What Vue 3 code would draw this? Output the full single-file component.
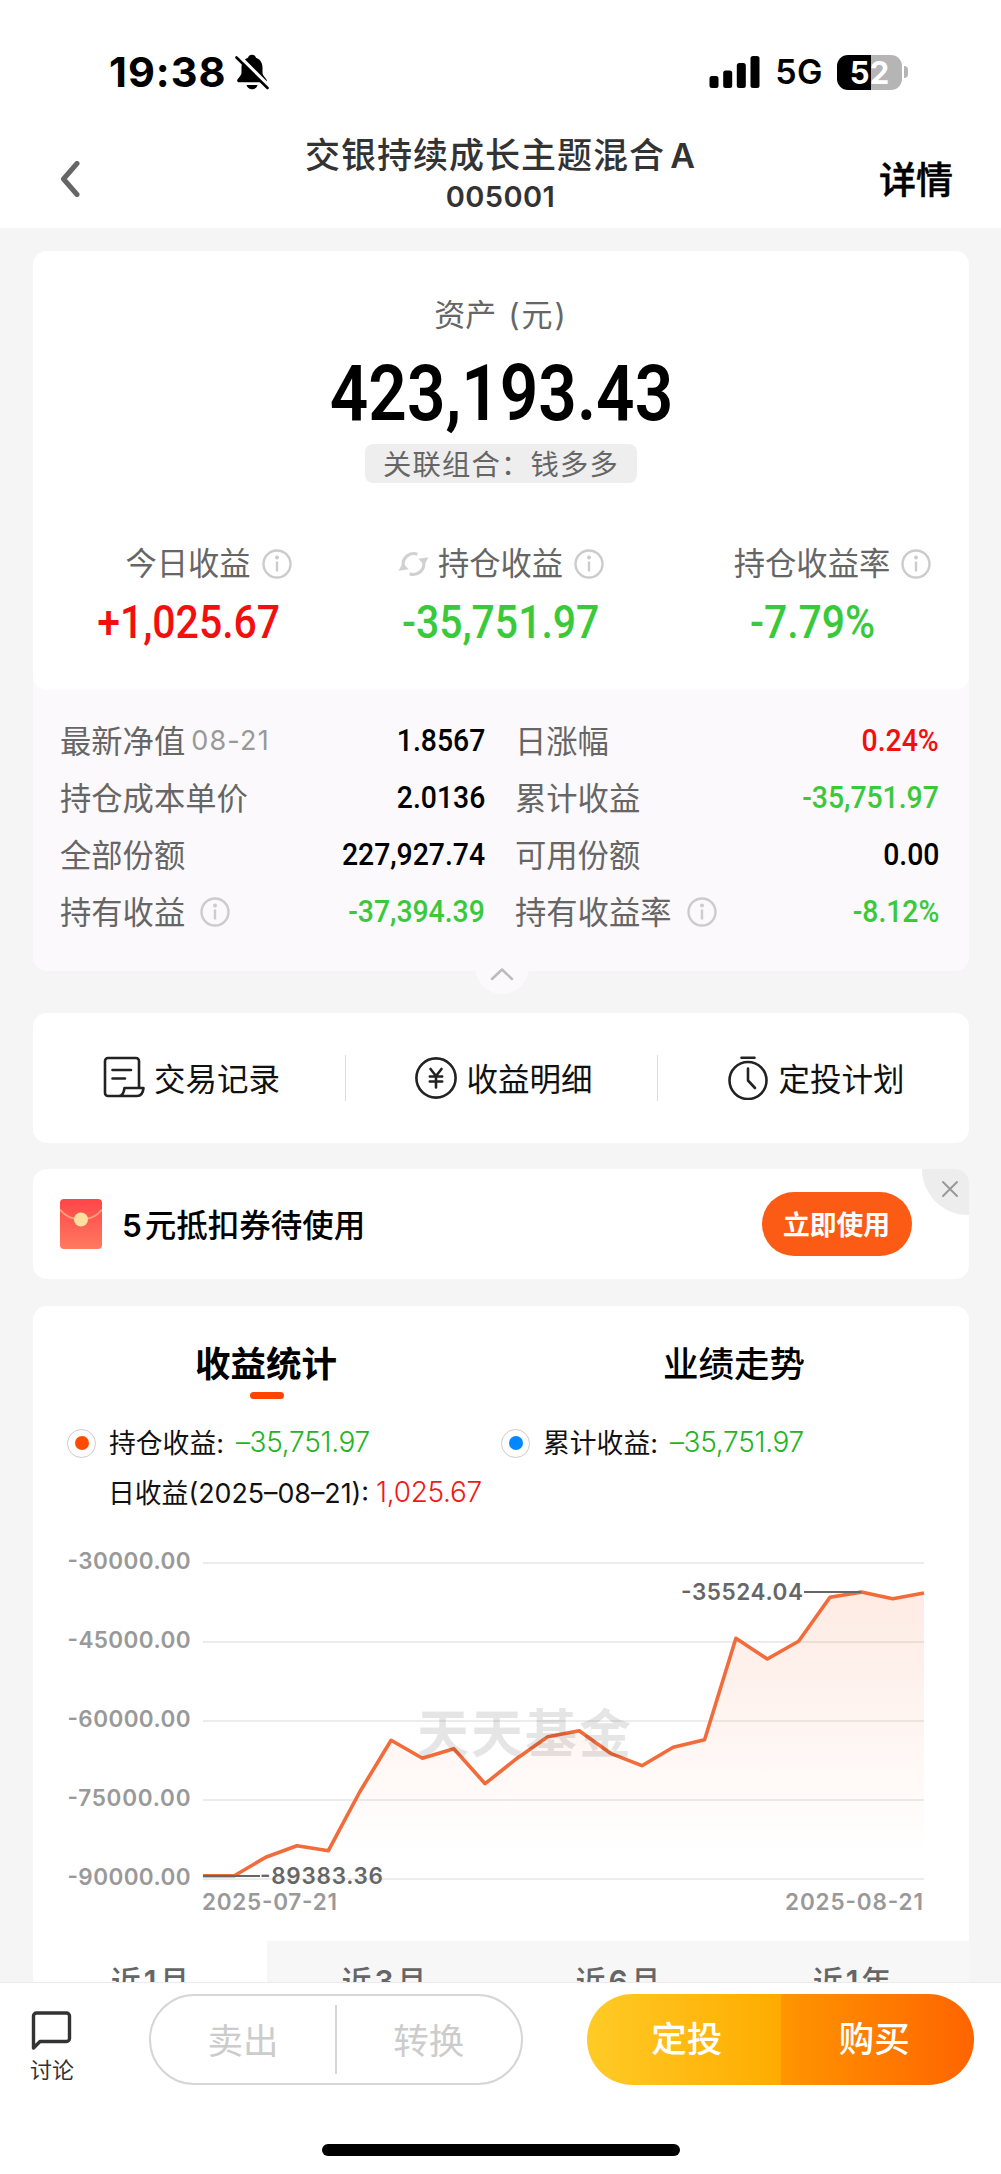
<template>
  <div class="page">
    <header class="top">
      <div class="status">
        <div class="clock">
          <span class="time">19:38</span>
          <svg class="bell" viewBox="0 0 36 36">
            <path d="M18 .8c2 0 3.500 1.200 4 2.900 4.300 1.600 6.500 5.300 6.500 9.800v5c0 3.200 3 4.800 4.200 7.500.5 1.300-.2 2.300-1.700 2.300H5c-1.500 0-2.200-1-1.700-2.300 1.200-2.700 4.200-4.300 4.200-7.500v-5c0-4.500 2.200-8.200 6.500-9.800.5-1.700 2-2.900 4-2.900z" fill="#000" />
            <path d="M12.500 31h11c-.6 2.500-2.800 4.200-5.500 4.200s-4.900-1.700-5.500-4.200z" fill="#000" />
            <path d="M4.500 1.500l31 31" stroke="#fff" stroke-width="3.500" />
            <path d="M2.500 3.500l31 30.500" stroke="#000" stroke-width="2.600" stroke-linecap="round" />
          </svg>
        </div>
        <div class="signal">
          <svg class="bars" viewBox="0 0 50 32">
            <rect x="0" y="20" width="9" height="12" rx="2.500" />
            <rect x="13.700" y="14.500" width="9" height="17.500" rx="2.500" />
            <rect x="27.300" y="7" width="9" height="25" rx="2.500" />
            <rect x="41" y="0" width="9" height="32" rx="2.500" />
          </svg>
          <span class="net">5G</span>
          <div class="battery"><span>52</span></div>
          <i class="nub"></i>
        </div>
      </div>
      <nav class="nav">
        <svg class="back" viewBox="0 0 20 36">
          <path d="M17 2.500L3.500 18 17 33.500" fill="none" stroke="#666" stroke-width="5" stroke-linecap="round" stroke-linejoin="round" />
        </svg>
        <div class="title">
          <div class="name">交银持续成长主题混合<span>A</span></div>
          <div class="code">005001</div>
        </div>
        <span class="detail">详情</span>
      </nav>
    </header>

    <main class="content">
      <section class="asset">
        <div class="asset-main">
          <div class="asset-label">资产<span>(元)</span></div>
          <div class="asset-value"><span class="din">423,193.43</span></div>
          <div class="tag">关联组合：钱多多</div>
          <div class="summary">
            <div v-for="item in summary" :key="item.label" class="summary-item">
              <div class="summary-label" :class="{ centered: item.refresh }">
                <svg v-if="item.refresh" class="refresh" viewBox="0 0 32 28">
                  <path d="M5.500 16A10.800 10.800 0 0 1 20 4M26.500 12A10.800 10.800 0 0 1 12 24" fill="none" stroke="#d0d0d0" stroke-width="3.200" />
                  <path d="M21 8.500l10.500-1.500-4.500 8z M11 19.500l-10.500 1.500 4.500-8z" fill="#d0d0d0" />
                </svg>
                <span>{{ item.label }}</span>
                <svg class="info" viewBox="0 0 30 30">
                  <circle cx="15" cy="15" r="13.500" />
                  <path d="M15 12.500v10" /><circle class="dot" cx="15" cy="8.500" r="2" />
                </svg>
              </div>
              <div class="summary-value" :class="item.tone"><span class="din">{{ item.value }}</span></div>
            </div>
          </div>
        </div>
        <div class="asset-more">
          <div v-for="row in details" :key="row.label" class="row">
            <span class="row-label">{{ row.label }}</span>
            <span v-if="row.date" class="row-date">{{ row.date }}</span>
            <svg v-if="row.info" class="info" viewBox="0 0 30 30">
              <circle cx="15" cy="15" r="13.500" />
              <path d="M15 12.500v10" /><circle class="dot" cx="15" cy="8.500" r="2" />
            </svg>
            <span class="row-value din" :class="row.tone">{{ row.value }}</span>
          </div>
        </div>
        <div class="fold">
          <svg viewBox="0 0 24 14"><path d="M2 12L12 2.500 22 12" fill="none" stroke="#bbb" stroke-width="2.500" stroke-linecap="round" stroke-linejoin="round" /></svg>
        </div>
      </section>

      <section class="actions">
        <div class="action">
          <svg viewBox="0 0 44 44">
            <path d="M37 31V5a3 3 0 0 0-3-3H6a3 3 0 0 0-3 3v32a3 3 0 0 0 3 3h29c3.500 0 6-3 6.500-8H22.500c-.6 4.500-2 8-5.500 8M10.500 14H29M10.500 22.500H23" />
          </svg>
          <span>交易记录</span>
        </div>
        <div class="action">
          <svg viewBox="0 0 44 44">
            <circle cx="22" cy="22" r="19.600" />
            <path d="M16.500 13l5.500 7 5.500-7M22 20v11.500M15.800 20.500h12.400M15.800 25.500h12.400" />
          </svg>
          <span>收益明细</span>
        </div>
        <div class="action">
          <svg viewBox="0 0 44 44">
            <circle cx="22" cy="24.500" r="18.500" />
            <path d="M15.500 1.800h13M22 12.500v12l7 7.500" />
          </svg>
          <span>定投计划</span>
        </div>
      </section>

      <section class="coupon">
        <svg class="envelope" viewBox="0 0 42 50">
          <defs>
            <linearGradient id="env" x1="0" y1="0" x2="0" y2="1">
              <stop offset="0" stop-color="#ff4549" />
              <stop offset="1" stop-color="#ff7a60" />
            </linearGradient>
          </defs>
          <rect width="42" height="50" rx="4" fill="url(#env)" />
          <path d="M0 10.500c5 6.500 12 10 21 10s16-3.500 21-10" fill="none" stroke="#ffa27c" stroke-width="1.800" />
          <circle cx="21" cy="20.500" r="7" fill="#ffdf9f" />
        </svg>
        <span class="coupon-text"><b>5</b>元抵扣券待使用</span>
        <button class="use">立即使用</button>
        <div class="close">
          <svg viewBox="0 0 18 18"><path d="M2 2l14 14M16 2L2 16" stroke="#999" stroke-width="2" stroke-linecap="round" /></svg>
        </div>
      </section>

      <section class="stats">
        <div class="tabs">
          <div class="tab active">收益统计</div>
          <div class="tab">业绩走势</div>
        </div>
        <div class="legend">
          <div class="legend-item">
            <i class="radio orange"></i><span class="k">持仓收益:</span><span class="v down">–35,751.97</span>
          </div>
          <div class="legend-item">
            <i class="radio blue"></i><span class="k">累计收益:</span><span class="v down">–35,751.97</span>
          </div>
        </div>
        <div class="daily">
          <span class="k">日收益<em>(2025–08–21):</em></span><span class="v up">1,025.67</span>
        </div>

        <svg class="chart" viewBox="0 0 936 400">
          <defs>
            <linearGradient id="area" gradientUnits="userSpaceOnUse" x1="0" y1="60" x2="0" y2="325">
              <stop offset="0" stop-color="#f4622a" stop-opacity=".13" />
              <stop offset="1" stop-color="#f4622a" stop-opacity="0" />
            </linearGradient>
          </defs>
          <g v-for="(tick, i) in ticks" :key="tick">
            <line x1="170" x2="891" :y1="TOP + i * STEP" :y2="TOP + i * STEP" stroke="#ececec" stroke-width="2" />
            <text class="tick" x="157.500" :y="TOP + i * STEP + 6" text-anchor="end" textLength="123">{{ tick }}</text>
          </g>
          <polygon :points="areaPoints" fill="url(#area)" />
          <polyline :points="linePoints" fill="none" stroke="#f26b3a" stroke-width="3.600" stroke-linejoin="round" />
          <text class="watermark" x="384" y="223" textLength="214">天天基金</text>
          <line x1="771" x2="828" y1="62" y2="62" stroke="#666" stroke-width="2" />
          <text class="mark" x="648" y="70" textLength="122">-35524.04</text>
          <line x1="170" x2="227" y1="346" y2="346" stroke="#666" stroke-width="2" />
          <text class="mark" x="227" y="354" textLength="123">-89383.36</text>
          <text class="tick" x="169" y="380" textLength="135">2025-07-21</text>
          <text class="tick" x="890" y="380" text-anchor="end" textLength="138">2025-08-21</text>
        </svg>

        <div class="ranges">
          <div v-for="(r, i) in ranges" :key="r.unit + r.n" class="range" :class="{ on: i === 0 }">
            近<b>{{ r.n }}</b>{{ r.unit }}
          </div>
        </div>
      </section>
    </main>

    <footer class="bottom">
      <div class="bar">
        <div class="talk">
          <svg viewBox="0 0 42 40"><path d="M3.500 37V5a3 3 0 0 1 3-3H36.500a3 3 0 0 1 3 3v22.500a3 3 0 0 1-3 3H10z" fill="none" stroke="#333" stroke-width="3.400" stroke-linejoin="round" /></svg>
          <span>讨论</span>
        </div>
        <div class="pill ghost">
          <span>卖出</span>
          <i></i>
          <span>转换</span>
        </div>
        <div class="pill solid">
          <span class="plan">定投</span>
          <span class="buy">购买</span>
        </div>
      </div>
      <div class="home"></div>
    </footer>
  </div>
</template>

<script setup>
import { computed } from 'vue';

const summary = [
  { label: '今日收益', value: '+1,025.67', tone: 'up' },
  { label: '持仓收益', value: '-35,751.97', tone: 'down', refresh: true },
  { label: '持仓收益率', value: '-7.79%', tone: 'down' },
];

const details = [
  { label: '最新净值', date: '08-21', value: '1.8567' },
  { label: '日涨幅', value: '0.24%', tone: 'up' },
  { label: '持仓成本单价', value: '2.0136' },
  { label: '累计收益', value: '-35,751.97', tone: 'down' },
  { label: '全部份额', value: '227,927.74' },
  { label: '可用份额', value: '0.00' },
  { label: '持有收益', value: '-37,394.39', tone: 'down', info: true },
  { label: '持有收益率', value: '-8.12%', tone: 'down', info: true },
];

const ranges = [
  { n: 1, unit: '月' },
  { n: 3, unit: '月' },
  { n: 6, unit: '月' },
  { n: 1, unit: '年' },
];
const ticks = ['-30000.00', '-45000.00', '-60000.00', '-75000.00', '-90000.00'];

const profits = [
  -89383.36, -89383.36, -85880, -83677, -84626, -73480, -63664, -67082,
  -65259, -71905, -67158, -62981, -61842, -66133, -68487, -64993,
  -63550, -44297, -48228, -44867, -36513, -35524.04, -36778, -35696,
];

// chart geometry
const TOP = 33;
const STEP = 79;
const LEFT = 170;
const WIDTH = 721;

const toXY = (v, i) => {
  const x = LEFT + (i * WIDTH) / (profits.length - 1);
  const y = TOP + ((-30000 - v) / 15000) * STEP;
  return `${x.toFixed(1)},${y.toFixed(1)}`;
};

const linePoints = computed(() => profits.map(toXY).join(' '));
const areaPoints = computed(() => `${LEFT},349 ${linePoints.value} ${LEFT + WIDTH},349`);
</script>

<style>
body {
  margin: 0;
  background: #f5f5f5;
}
</style>

<style scoped>
.page {
  width: 1001px;
  height: 2174px;
  display: flex;
  flex-direction: column;
  overflow: hidden;
  background: #f5f5f5;
  color: #000;
  font-family: Inter, "Noto Sans CJK SC", sans-serif;
}

svg {
  display: block;
  flex: none;
}

/* 数字字体：收窄的 Roboto */
.din {
  display: inline-block;
  font-family: Roboto, sans-serif;
  font-weight: 500;
  transform: scaleX(0.9);
}

.up { color: #f40f0f; }
.down { color: #3ac93a; }

/* 顶部 */
.top {
  flex: none;
  height: 228px;
  background: #fff;
}

.status {
  height: 130px;
  padding: 14px 93px 0 109px;
  box-sizing: border-box;
  display: flex;
  align-items: center;
  justify-content: space-between;
}

.clock,
.signal {
  display: flex;
  align-items: center;
}

.time {
  font-size: 41.500px;
  font-weight: 750;
  letter-spacing: 1px;
  line-height: 50px;
}

.bell {
  width: 36px;
  height: 36px;
  margin-left: 7px;
}

.bars {
  width: 51px;
  height: 32px;
}

.net {
  margin-left: 15px;
  font-size: 34px;
  font-weight: 600;
  letter-spacing: 0.500px;
  line-height: 40px;
}

.battery {
  width: 65px;
  height: 35px;
  margin-left: 14px;
  border-radius: 11px;
  background: linear-gradient(90deg, #000 52%, #b5b5b5 52%);
  color: #fff;
  font-size: 31px;
  font-weight: 750;
  line-height: 35px;
  text-align: center;
}

.nub {
  width: 4px;
  height: 12px;
  margin-left: 2px;
  border-radius: 0 4px 4px 0;
  background: #b5b5b5;
}

.nav {
  height: 98px;
  padding: 0 48px 0 60px;
  display: flex;
  align-items: center;
  justify-content: space-between;
}

.back {
  width: 20px;
  height: 36px;
}

.title {
  flex: 1;
  padding: 0 0 11px 42px;
  text-align: center;
  color: #333;
  font-weight: 500;
}

.name {
  font-size: 35px;
  letter-spacing: 1px;
  line-height: 46px;
}

.name span {
  margin-left: 5px;
  font-size: 34px;
  font-weight: 600;
}

.code {
  font-size: 29px;
  font-weight: 600;
  letter-spacing: 0.400px;
  line-height: 36px;
}

.detail {
  margin-bottom: 2px;
  font-size: 37px;
  font-weight: 500;
  -webkit-text-stroke: 0.500px #000;
}

/* 卡片区 */
.content {
  flex: 1;
  min-height: 0;
  padding: 23px 32px 0 33px;
  overflow: hidden;
}

.asset {
  position: relative;
  height: 720px;
  border-radius: 14px;
  background: #fbf9fb;
}

.asset-main {
  height: 439px;
  border-radius: 14px;
  background: #fff;
  display: flex;
  flex-direction: column;
  align-items: center;
}

.asset-label {
  margin-top: 41px;
  color: #666;
  font-size: 31px;
  line-height: 46px;
}

.asset-label span {
  margin-left: 12px;
  letter-spacing: 2px;
}

.asset-value {
  height: 80px;
  margin-top: 12px;
  font-size: 78px;
  line-height: 84px;
}

.asset-value .din {
  font-weight: 600;
  transform: scaleX(0.865);
}

.tag {
  width: 272px;
  height: 39px;
  margin-top: 14px;
  border-radius: 8px;
  background: #eee;
  color: #666;
  font-size: 28.300px;
  letter-spacing: 1.200px;
  line-height: 42px;
  text-align: center;
}

.summary {
  width: 100%;
  margin-top: 56px;
  display: grid;
  grid-template-columns: repeat(3, 1fr);
}

.summary-label {
  height: 46px;
  padding-left: 39px;
  display: flex;
  align-items: center;
  justify-content: center;
  color: #666;
  font-size: 31.300px;
}

.summary-label span {
  margin-top: -2px;
}

.summary-label .info,
.summary-label .refresh {
  margin-top: 3px;
}

.summary-label.centered {
  padding-left: 0;
}

.refresh {
  width: 31px;
  height: 28px;
  margin-right: 9px;
}

.info {
  width: 30px;
  height: 30px;
  margin-left: 11px;
  fill: none;
  stroke: #ccc;
  stroke-width: 2.400;
}

.info .dot {
  fill: #ccc;
  stroke: none;
}

.summary-value {
  margin-top: 9px;
  font-size: 45.500px;
  line-height: 56px;
  text-align: center;
}

.asset-more {
  padding: 22px 30px 0 27px;
  display: grid;
  grid-template-columns: 425px 1fr;
  grid-auto-rows: 57px;
  column-gap: 30px;
}

.row {
  display: flex;
  align-items: center;
}

.row-label {
  margin-top: -3px;
  color: #666;
  font-size: 31.300px;
}

.row-date {
  margin-left: 6px;
  color: #999;
  font-size: 27px;
  letter-spacing: 1.200px;
}

.row .info {
  margin-left: 15px;
}

.row-value {
  margin-left: auto;
  font-size: 31.500px;
  transform-origin: right center;
}

.fold {
  position: absolute;
  left: 442px;
  bottom: -23px;
  width: 54px;
  height: 54px;
  border-radius: 50%;
  background: #fbf9fb;
}

.fold svg {
  width: 24px;
  height: 14px;
  margin: 27px auto 0;
}

.actions {
  height: 130px;
  margin-top: 42px;
  border-radius: 14px;
  background: #fff;
  display: grid;
  grid-template-columns: repeat(3, 1fr);
  align-items: center;
}

.action {
  height: 46px;
  padding-left: 4px;
  display: flex;
  align-items: center;
  justify-content: center;
  color: #111;
  font-size: 31.500px;
}

.action span {
  margin-top: -3px;
}

.action + .action {
  border-left: 1px solid #ddd;
}

.action svg {
  width: 44px;
  height: 44px;
  margin-right: 8px;
  fill: none;
  stroke: #222;
  stroke-width: 2.600;
  stroke-linecap: round;
  stroke-linejoin: round;
}

.coupon {
  position: relative;
  height: 110px;
  margin-top: 26px;
  padding: 0 57px 0 27px;
  border-radius: 14px;
  overflow: hidden;
  background: #fff;
  display: flex;
  align-items: center;
}

.envelope {
  width: 42px;
  height: 50px;
}

.coupon-text {
  flex: 1;
  margin: -3px 0 0 20px;
  font-size: 31.500px;
  font-weight: 500;
}

.coupon-text b {
  margin-right: 3px;
  font-weight: 600;
}

.use {
  width: 150px;
  height: 64px;
  padding: 0 1px 2px 0;
  border: 0;
  border-radius: 32px;
  background: #fb5b14;
  color: #fff;
  font: 700 26.800px "Noto Sans CJK SC", sans-serif;
}

.close {
  position: absolute;
  top: 0;
  right: 0;
  width: 47px;
  height: 46px;
  border-bottom-left-radius: 46px;
  background: #ededed;
}

.close svg {
  width: 18px;
  height: 18px;
  margin: 11px 0 0 19px;
}

/* 收益统计 */
.stats {
  height: 760px;
  margin-top: 27px;
  border-radius: 14px 14px 0 0;
  background: #fff;
}

.tabs {
  height: 93px;
  display: grid;
  grid-template-columns: repeat(2, 1fr);
}

.tab {
  position: relative;
  padding: 33px 2px 0 0;
  font-size: 35.500px;
  font-weight: 500;
  line-height: 52px;
  text-align: center;
}

.tab.active {
  font-weight: 700;
}

.tab.active::after {
  content: "";
  position: absolute;
  left: 217px;
  bottom: 0;
  width: 34px;
  height: 7px;
  border-radius: 4px;
  background: #ff4400;
}

.legend {
  height: 50px;
  margin-top: 19px;
  padding-left: 34px;
  display: grid;
  grid-template-columns: 434px 1fr;
}

.legend-item,
.daily {
  display: flex;
  align-items: center;
  font-size: 26.800px;
}

.radio {
  width: 27px;
  height: 27px;
  border: 1.500px solid #ccc;
  border-radius: 50%;
  display: grid;
  place-items: center;
}

.radio::before {
  content: "";
  width: 14px;
  height: 14px;
  border-radius: 50%;
  background: #ff4a00;
}

.radio.blue::before {
  background: #0088ff;
}

.k {
  margin: -3px 0 0 13px;
  color: #111;
}

.k em {
  font-style: normal;
  letter-spacing: 0;
}

.v {
  margin: -3px 0 0 12px;
  font-size: 28px;
  font-weight: 350;
  letter-spacing: -0.300px;
}

.v.down { color: #22b422; }
.v.up { color: #f01818; }

.daily {
  height: 50px;
  padding-left: 62px;
}

.daily .v {
  margin-left: 7px;
}

.chart {
  width: 936px;
  height: 400px;
  margin-top: 12px;
}

.tick,
.mark {
  font-size: 22.500px;
  font-weight: 600;
  fill: #999;
}

.mark {
  fill: #666;
}

.watermark {
  font-family: "Noto Sans CJK SC", sans-serif;
  font-size: 52px;
  font-weight: 700;
  fill: rgba(0, 0, 0, 0.1);
}

.ranges {
  height: 86px;
  margin-top: 11px;
  display: grid;
  grid-template-columns: repeat(4, 1fr);
}

.range {
  background: #f7f7f7;
  color: #666;
  font-size: 30px;
  font-weight: 500;
  line-height: 81px;
  text-align: center;
}

.range b {
  margin: 0 3px;
  font-weight: 600;
}

.range.on {
  background: #fff;
}

/* 底部操作栏 */
.bottom {
  flex: none;
  height: 192px;
  border-top: 1px solid #ebebeb;
  box-sizing: border-box;
  background: #fff;
}

.bar {
  height: 91px;
  padding: 11px 27px 0 30px;
  display: flex;
  align-items: center;
}

.talk {
  width: 44px;
  padding-top: 17px;
  color: #333;
  font-size: 22px;
  line-height: 32px;
}

.talk svg {
  width: 42px;
  height: 40px;
  margin-bottom: 3px;
}

.pill {
  height: 91px;
  box-sizing: border-box;
  border-radius: 46px;
  display: flex;
  align-items: center;
  font-size: 35.500px;
  text-align: center;
}

.pill span {
  flex: 1;
}

.ghost {
  width: 374px;
  margin-left: 75px;
  border: 2px solid #d6d6d6;
  color: #ccc;
}

.ghost span {
  margin-top: -2px;
}

.ghost i {
  width: 1.500px;
  height: 69px;
  background: #d6d6d6;
}

.solid {
  width: 387px;
  margin-left: auto;
  overflow: hidden;
  color: #fff;
  font-weight: 500;
  line-height: 92px;
}

.plan {
  padding-left: 6px;
  background: linear-gradient(90deg, #ffcb26, #ffab00);
}

.buy {
  padding-right: 6px;
  background: linear-gradient(90deg, #ff9500, #ff6400);
}

.home {
  width: 358px;
  height: 12px;
  margin: 59px auto 0;
  border-radius: 6px;
  background: #000;
}
</style>
